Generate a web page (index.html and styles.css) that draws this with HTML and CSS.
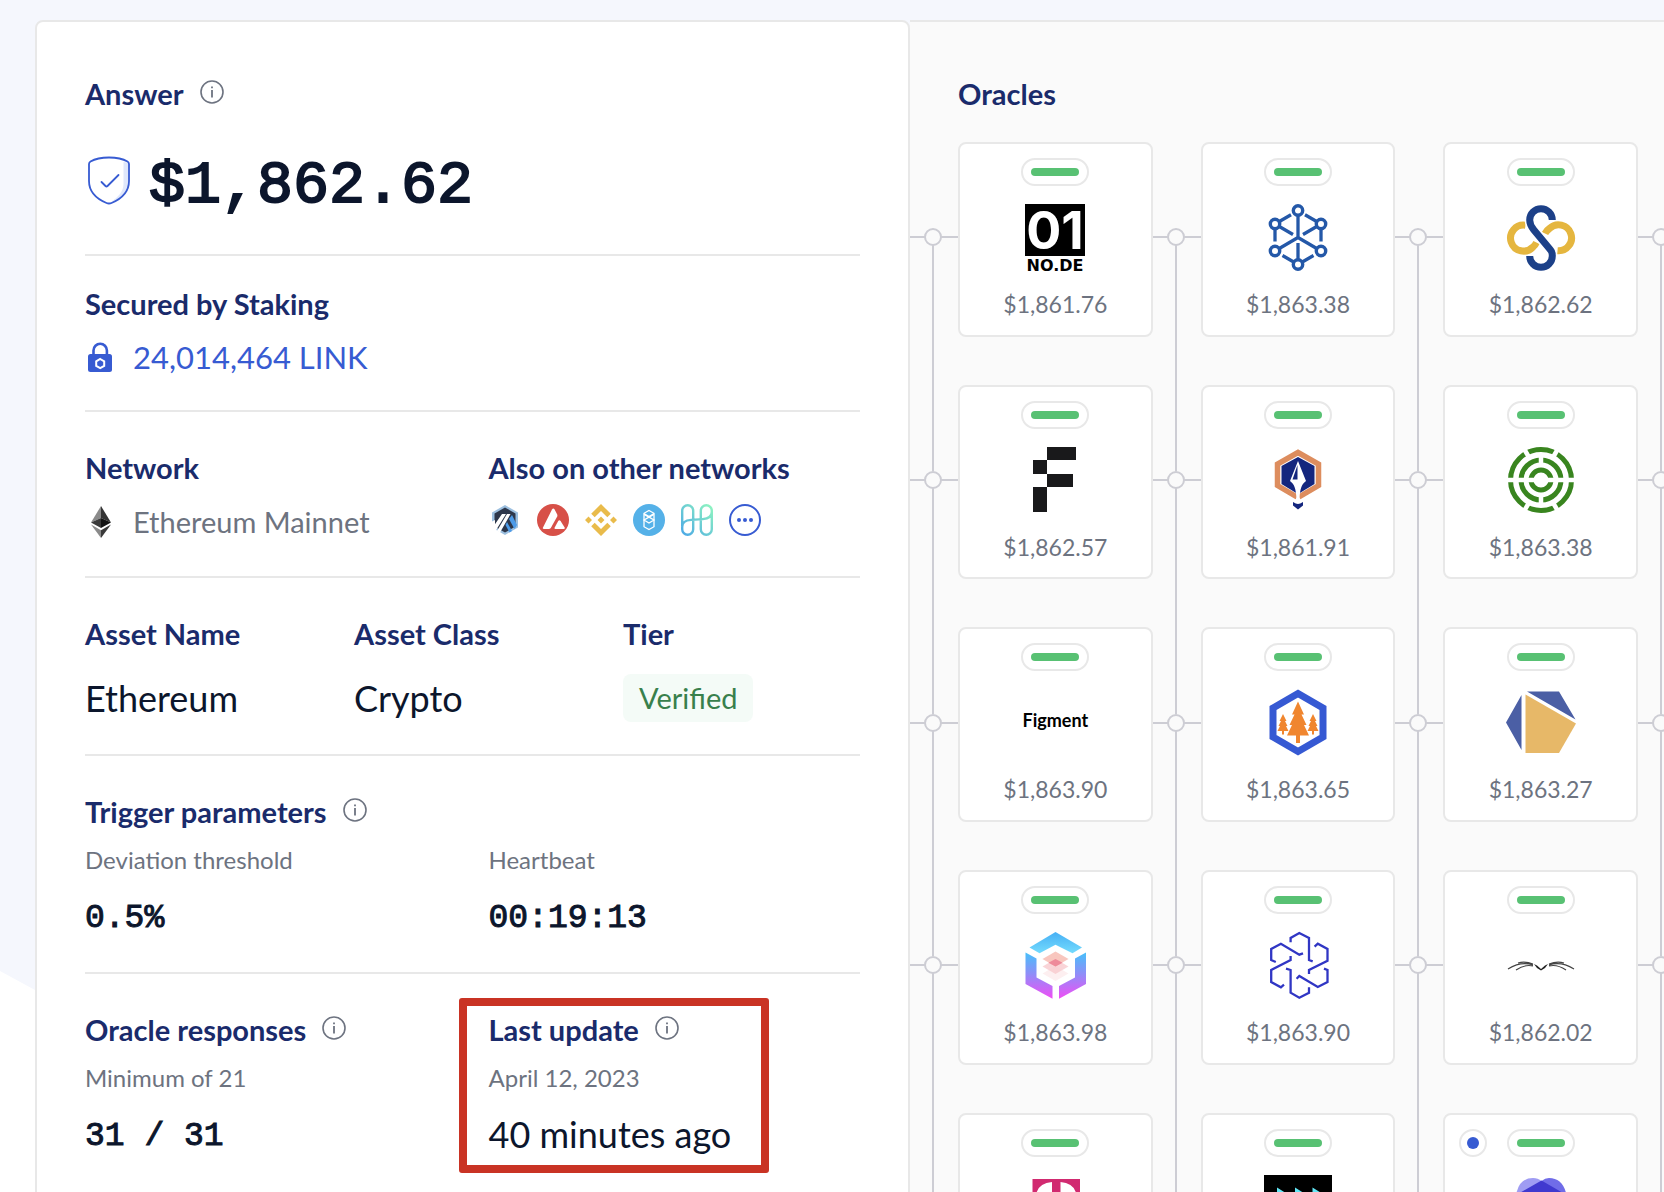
FILE: index.html
```html
<!DOCTYPE html>
<html lang="en">
<head>
<meta charset="utf-8">
<meta name="viewport" content="width=device-width, initial-scale=1">
<title>ETH / USD price feed</title>
<link rel="stylesheet" href="styles.css">
</head>
<body>
<svg class="defs" aria-hidden="true">
  <symbol id="info" viewBox="0 0 24 24"><circle cx="12" cy="12" r="11" fill="none" stroke="#6d7380" stroke-width="1.6"/><path d="M12 10v7.5M12 6.4v1.8" stroke="#6d7380" stroke-width="1.8" fill="none"/></symbol>
</svg>
<main class="feed">
  <section class="details">
    <div class="block block-answer">
      <h2 class="title">Answer <button class="info" aria-label="About the answer"><svg><use href="#info"/></svg></button></h2>
      <p class="answer">
        <svg class="shield" viewBox="0 0 48 48"><path d="M38.500 6v22c0 8-6 13.500-12 17.500 10-3.500 17-9.500 17-19.500V7z" fill="#dfe7fb"/><path d="M24 1.500c7.500 0 14 1.400 18.500 4 1 .6 1.500 1.200 1.500 2.500v17c0 11-8 18-17.500 22q-2.500 1-5 0C12 43 4 36 4 25V8c0-1.300.5-1.900 1.500-2.500C10 2.900 16.500 1.500 24 1.500z" fill="none" stroke="#375bd2" stroke-width="1.800"/><path d="M16.500 26l4 4q1 1 2 0L33.500 19" fill="none" stroke="#375bd2" stroke-width="1.800" stroke-linecap="round"/></svg>
        <span class="amount">$1,862.62</span>
      </p>
    </div>
    <div class="block block-staking">
      <h2 class="title">Secured by Staking</h2>
      <p class="staked">
        <svg class="lock" viewBox="0 0 32 32"><path d="M8.500 14V9.500a6.700 6.700 0 0 1 13.400 0V14" fill="none" stroke="#375bd2" stroke-width="2.600"/><rect x="3" y="13" width="24" height="18" rx="2.500" fill="#375bd2"/><path d="M15.200 18l4 2.300v4.500l-4 2.300-4-2.300v-4.500z" fill="none" stroke="#fff" stroke-width="2"/></svg>
        <a href="#staking">24,014,464 LINK</a>
      </p>
    </div>
    <div class="block cols-2">
      <div>
        <h2 class="title">Network</h2>
        <p class="network">
          <svg class="eth" viewBox="0 0 32 32"><path d="M16 0L6 16.500 16 12z" fill="#8a8a8a"/><path d="M16 0l10 16.500L16 12z" fill="#343434"/><path d="M6 16.500L16 12v10z" fill="#3a3a3a"/><path d="M26 16.500L16 12v10z" fill="#141414"/><path d="M6 18.500l10 5.700V32z" fill="#8a8a8a"/><path d="M26 18.500l-10 5.700V32z" fill="#393939"/></svg>
          <span>Ethereum Mainnet</span>
        </p>
      </div>
      <div>
        <h2 class="title">Also on other networks</h2>
        <div class="networks">
          <a href="#arbitrum" aria-label="Arbitrum"><svg viewBox="0 0 32 32"><path d="M16 1l13 7.500v15L16 31 3 23.500v-15z" fill="#9dc0e0"/><path d="M16 3.500l10.500 6v13L16 28.500l-10.500-6v-13z" fill="#2d374b"/><path d="M20 15l3-4 5 10-2.500 4z" fill="#4d9be8"/><path d="M18 18l5 9-2.500 1.500L16.500 21z" fill="#4d9be8"/><path d="M13 10h4L6.500 27 3 24.500zM18 10h3.500L11 28.500 8 27z" fill="#fff"/><path d="M2 18l4-2v8l-4 1z" fill="#fff"/></svg></a>
          <a href="#avalanche" aria-label="Avalanche"><svg viewBox="0 0 32 32"><circle cx="16" cy="16" r="16" fill="#d75048"/><path d="M15 5.500q1.300-2 2.600 0l2.500 4.700q.6 1.300 0 2.600L13.800 24q-.7 1-2 1H7q-1.800 0-.9-1.800z" fill="#fff"/><path d="M21.200 17q1.200-1.600 2.400 0l4 6.500q.7 1.500-1 1.500h-8q-1.700 0-.9-1.600z" fill="#fff"/></svg></a>
          <a href="#bnb" aria-label="BNB Chain"><svg viewBox="0 0 32 32" fill="#e9bb4b"><path d="M16 0l9.800 9.800-3.500 3.500L16 7l-6.300 6.300-3.500-3.500z"/><path d="M16 32l9.800-9.800-3.500-3.500L16 25l-6.300-6.300-3.500 3.500z"/><path d="M3.500 12.500L7 16l-3.500 3.500L0 16zM28.500 12.500L32 16l-3.500 3.500L25 16zM16 12.500l3.500 3.500-3.500 3.500-3.500-3.500z"/></svg></a>
          <a href="#fantom" aria-label="Fantom"><svg viewBox="0 0 32 32"><circle cx="16" cy="16" r="16" fill="#55b1e8"/><g fill="none" stroke="#fff" stroke-width="1.300"><path d="M16 6.500l5 2.800v13.400l-5 2.800-5-2.800V9.300z"/><path d="M11 9.500l5 3 5-3M11 16l5-3 5 3-5 3zM11 10.500l10 5.500M21 10.500L11 16"/></g></svg></a>
          <a href="#harmony" aria-label="Harmony"><svg viewBox="0 0 32 32"><defs><linearGradient id="one" x1="0" y1="1" x2="1" y2="0"><stop offset="0" stop-color="#4ba8e6"/><stop offset="1" stop-color="#8ff5c0"/></linearGradient></defs><g fill="none" stroke="url(#one)" stroke-width="2.400"><path d="M1.200 22V6.700a5.500 5.500 0 0 1 11 0v18.600a5.500 5.500 0 0 1-11 0V23c0-5 3-6.600 9-7.100l11.600-.8c6-.5 9-2.600 9-7.100V6.700a5.500 5.500 0 0 0-11 0v18.600a5.500 5.500 0 0 0 11 0V8"/></g></svg></a>
          <button class="more" aria-label="More networks"><svg viewBox="0 0 32 32"><circle cx="16" cy="16" r="15" fill="none" stroke="#375bd2" stroke-width="2"/><g fill="#375bd2"><circle cx="10" cy="16" r="2"/><circle cx="16" cy="16" r="2"/><circle cx="22" cy="16" r="2"/></g></svg></button>
        </div>
      </div>
    </div>
    <div class="block cols-3">
      <div><h2 class="title">Asset Name</h2><p class="asset">Ethereum</p></div>
      <div><h2 class="title">Asset Class</h2><p class="asset">Crypto</p></div>
      <div><h2 class="title">Tier</h2><p class="asset"><span class="badge">Verified</span></p></div>
    </div>
    <div class="block">
      <h2 class="title">Trigger parameters <button class="info" aria-label="About trigger parameters"><svg><use href="#info"/></svg></button></h2>
      <div class="cols-2">
        <div><p class="sub">Deviation threshold</p><p class="value mono">0.5%</p></div>
        <div><p class="sub">Heartbeat</p><p class="value mono">00:19:13</p></div>
      </div>
    </div>
    <div class="block cols-2">
      <div>
        <h2 class="title">Oracle responses <button class="info" aria-label="About oracle responses"><svg><use href="#info"/></svg></button></h2>
        <p class="sub">Minimum of 21</p>
        <p class="value mono">31 / 31</p>
      </div>
      <div class="marked">
        <h2 class="title">Last update <button class="info" aria-label="About the last update"><svg><use href="#info"/></svg></button></h2>
        <p class="sub">April 12, 2023</p>
        <p class="value">40 minutes ago</p>
      </div>
    </div>
  </section>

  <section class="oracles">
    <h2 class="title">Oracles</h2>
    <ul class="grid">
      <li class="card"><i class="link"></i><span class="pill"></span>
        <svg class="logo" viewBox="0 0 68 68"><path d="M4 0h60v52H4z"/><text x="34" y="45" class="logo-01">01</text><text x="34" y="67" class="logo-node">NO.DE</text></svg>
        <span class="price">$1,861.76</span></li>
      <li class="card"><i class="link"></i><span class="pill"></span>
        <svg class="logo" viewBox="0 0 68 68"><g fill="none" stroke="#2458a8" stroke-width="3.300"><path d="M34 6v27.500L11 47M34 33.500L57 47M11 20l18 10.500M57 20L39 30.500M34 60V39M11 20l16-9.200M57 20l-16-9.200M11 20v17.500M57 20v17.500M34 60.500l-15.500-9M34 60.500l15.500-9"/><g fill="#fff" stroke-width="3.400"><circle cx="34" cy="6.500" r="4.700"/><circle cx="57" cy="20" r="4.700"/><circle cx="57" cy="47" r="4.700"/><circle cx="34" cy="60.500" r="4.700"/><circle cx="11" cy="47" r="4.700"/><circle cx="11" cy="20" r="4.700"/></g></g></svg>
        <span class="price">$1,863.38</span></li>
      <li class="card"><i class="link"></i><i class="link link-end"></i><span class="pill"></span>
        <svg class="logo" viewBox="0 0 68 68" fill="none"><path d="M18.500 21.200A13 13 0 1 0 26 43q2-1.500 3.500-4.500M38 29.500q1.500-3 4.500-5A13 13 0 1 1 50.500 46.800" stroke="#e5b63f" stroke-width="7"/><path d="M45.300 16a11.300 11.300 0 1 0-22.600 0c0 4 1 6 4 9.700L41.500 43.500c3 3.500 3.800 4.500 3.800 8.500a11.300 11.300 0 0 1-22.600 0" stroke="#fff" stroke-width="10"/><path d="M45.300 16a11.300 11.300 0 1 0-22.600 0c0 4 1 6 4 9.700L41.500 43.500c3 3.500 3.800 4.500 3.800 8.500a11.300 11.300 0 0 1-22.600 0" stroke="#1c4088" stroke-width="7"/></svg>
        <span class="price">$1,862.62</span></li>

      <li class="card"><i class="link"></i><span class="pill"></span>
        <svg class="logo" viewBox="0 0 68 68"><path d="M26 0h29v13H26v14h26v13H26v25H12V40h14V27H12V13h14z" fill="#19191b"/></svg>
        <span class="price">$1,862.57</span></li>
      <li class="card"><i class="link"></i><span class="pill"></span>
        <svg class="logo" viewBox="0 0 68 68"><path d="M33 50L13.500 38.500V17L34 5.500 54.500 17v21.500L35 50" fill="none" stroke="#dd8d5e" stroke-width="5.500"/><path d="M34 10l16.500 9v18L35 46.500h-2L17.500 37V19z" fill="#14267e"/><path d="M34 14l8 20c-4 3-6 7-6.500 18h-3C32 41 30 37 26 34z" fill="#fff"/><path d="M33.500 18v14.500h-5z" fill="#14267e"/><path d="M29 55q3 2 5 2t5-2v3.500L34 62.500l-5-4z" fill="#14267e"/></svg>
        <span class="price">$1,861.91</span></li>
      <li class="card"><i class="link"></i><i class="link link-end"></i><span class="pill"></span>
        <svg class="logo" viewBox="0 0 68 68" fill="none"><g stroke="#39851f" stroke-width="5"><circle cx="34" cy="33" r="30.500"/><circle cx="34" cy="33" r="20"/><circle cx="34" cy="33" r="10"/></g><path d="M0 33h68M34 8v10M34 48v10M21.500 9.500L16 0M46.500 9.500L52 0M21.500 56.500L16 66M46.500 56.500L52 66" stroke="#fff" stroke-width="4.500"/></svg>
        <span class="price">$1,863.38</span></li>

      <li class="card"><i class="link"></i><span class="pill"></span>
        <span class="logo wordmark">Figment</span>
        <span class="price">$1,863.90</span></li>
      <li class="card"><i class="link"></i><span class="pill"></span>
        <svg class="logo" viewBox="0 0 68 68"><path d="M34 4.500l25 14.500v29L34 62.500 9 48V19z" fill="#fff" stroke="#3659d3" stroke-width="7"/><g fill="#f0862f"><path d="M34 12.500l6 13h-2.500l5 10.500H40l5 10.500H36v7.500h-4v-7.500h-9L28 36h-2.500l5-10.500H28z"/><path d="M19 25l3.500 7H21l2.500 5H22l2.500 5H20v3.500h-2V42h-4.500L16 37h-1.500l2.500-5h-1.500z"/><path d="M49 25l3.500 7H51l2.500 5H52l2.500 5H50v3.500h-2V42h-4.500L46 37h-1.500l2.500-5h-1.500z"/></g></svg>
        <span class="price">$1,863.65</span></li>
      <li class="card"><i class="link"></i><i class="link link-end"></i><span class="pill"></span>
        <svg class="logo" viewBox="0 0 68 68"><path d="M-1 33.500L14.500 6v55zM20 2.500h32l16.500 28z" fill="#4b5fa5"/><path d="M18.500 5.500L69 34.500 52 64H18.500z" fill="#e7b868"/></svg>
        <span class="price">$1,863.27</span></li>

      <li class="card"><i class="link"></i><span class="pill"></span>
        <svg class="logo" viewBox="0 0 68 68"><defs><linearGradient id="cap" x1="0" y1="0" x2="0" y2="1"><stop offset="0" stop-color="#47b0f5"/><stop offset="1" stop-color="#74dbfd"/></linearGradient><linearGradient id="side" x1="0" y1="0" x2="0" y2="1"><stop offset="0" stop-color="#47c0fa"/><stop offset=".45" stop-color="#8d8ff8"/><stop offset="1" stop-color="#f04ef5"/></linearGradient></defs><path d="M34.500 0L61 15.500l-9.500 5.800-17-8.500-16 8.500L8.500 15.500z" fill="url(#cap)"/><path d="M4.500 20.500l11 6v19l16 8.500v12.700L4.500 52zM65 20.500l-11 6v19L38 54v12.700L65 52z" fill="url(#side)"/><path d="M34.500 34l13 7.500-13 7.500-13-7.500z" fill="#fdeff0"/><path d="M34.500 27l13 7.500-13 7.500-13-7.500z" fill="#f7c9cd" fill-opacity=".8"/><path d="M34.500 19.500l13 7.500-13 7.500-13-7.500z" fill="#f6b8ae" fill-opacity=".8"/><path d="M34.500 27l7 3.800-7 3.700-7-3.700z" fill="#ee8a9a"/></svg>
        <span class="price">$1,863.98</span></li>
      <li class="card"><i class="link"></i><span class="pill"></span>
        <svg class="logo" viewBox="0 0 68 68"><path d="M26.600 10.300V6l8.700-5L45 6v22l3.700 1.300M11.800 30l-4.600-2V17l9.700-5.300 18.400 11 3.700-1.400M50.600 14.700l3.200-3 9.700 5.300v11.700L45 38v4M26.600 24v4L7.200 38v12l9.700 5.300 3.100-2.600M22 36.700l4.600 1.300v22.700l8.700 5 9.700-5v-5.400M32.600 46.700l2.700-2.700 18.500 11 9.700-5V38L60 36.700" fill="none" stroke="#3036c4" stroke-width="2.300"/></svg>
        <span class="price">$1,863.90</span></li>
      <li class="card"><i class="link"></i><i class="link link-end"></i><span class="pill"></span>
        <svg class="logo" viewBox="0 0 68 68" fill="none"><g stroke="#444" stroke-width="1.200"><path d="M26 33Q14 29 1 37M26 34Q18 32 9 38M26 32Q18 29 11 31M42 33q12-4 25 4M42 34q8-2 17 4M42 32q8-3 15-1"/></g><path d="M27 32l3 1.500 4 3.500 4-3.500 3-1.500-3 4-4 2.500-4-2.500z" fill="#222"/></svg>
        <span class="price">$1,862.02</span></li>

      <li class="card"><i class="link"></i><span class="pill"></span>
        <svg class="logo" viewBox="0 0 68 68"><path d="M11.500 4h47.500v64H11.500z" fill="#d12a70"/><path d="M31 7v45H15V20Q17 8 31 7zM39.500 7v45H55.500V20Q53.500 8 39.500 7z" fill="#fff"/></svg></li>
      <li class="card"><i class="link"></i><span class="pill"></span>
        <svg class="logo" viewBox="0 0 68 68"><path d="M0 0h68v68H0z"/><path d="M13 12.500l16 10-16 10zM31 12.500l16 10-16 10zM48.500 12.500l16 10-16 10z" fill="#63e6f5"/></svg></li>
      <li class="card"><i class="link"></i><i class="link link-end"></i><span class="dot"></span><span class="pill"></span>
        <svg class="logo" viewBox="0 0 68 68"><path d="M9 20Q12 3 26 3q5 0 8.500 3L22 40z" fill="#9f9cf3"/><path d="M59.500 20Q56 3 42 3q-4 0-7.500 3L46 40z" fill="#706ce8"/><path d="M34.500 5.500L59.500 20 50 50H18L9 20z" fill="#4039cf"/></svg></li>
    </ul>
  </section>
</main>
</body>
</html>
```

FILE: styles.css
```css
*, *::before, *::after { box-sizing: border-box; }

body {
  position: relative;
  margin: 0;
  height: 100vh;
  overflow: hidden;
  background: #fff;
  color: #0c162c;
  font-family: Lato, "Liberation Sans", sans-serif;
}

/* tinted backdrop with a slanted lower edge */
body::before {
  content: "";
  position: absolute;
  inset: 0;
  z-index: -1;
  background: #f5f7fd;
  clip-path: polygon(0 0, 100% 0, 100% 100%, 440px 100%, 440px 1210px, 0 971px);
}

h2, p, ul { margin: 0; padding: 0; }
ul { list-style: none; }
button { padding: 0; border: 0; background: none; cursor: pointer; }
a { color: inherit; text-decoration: none; }
svg { display: block; flex: none; overflow: visible; }
.defs { position: absolute; width: 0; height: 0; }

.feed {
  display: grid;
  grid-template-columns: minmax(0, 875fr) minmax(0, 754fr);
  margin: 20px 0 0 35px;
}

.details {
  padding: 16px 48px 0;
  border: 2px solid #e8e8e8;
  border-radius: 8px 8px 0 0;
  background: #fff;
}

.block { padding: 32px 0; }
.block + .block { border-top: 2px solid #e8e8e8; }
.block-staking { padding-top: 24px; }

.cols-2, .cols-3 { display: grid; column-gap: 32px; }
.cols-2 { grid-template-columns: repeat(2, minmax(0, 1fr)); }
.cols-3 { grid-template-columns: repeat(3, minmax(0, 1fr)); }

.title {
  display: flex;
  align-items: center;
  gap: 16px;
  color: #1a2b6b;
  font-size: 29px;
  font-weight: 700;
  line-height: 48px;
}
.info { height: 28px; padding-bottom: 4px; }
.info svg { width: 24px; height: 24px; }

.answer {
  display: flex;
  align-items: center;
  gap: 16px;
  padding-top: 20px;
}
.amount {
  padding-top: 12px;
  font: 400 60px/72px "Liberation Mono", monospace;
  -webkit-text-stroke: 2px currentColor;
}
.shield { width: 48px; height: 48px; }

.staked, .network { display: flex; align-items: center; gap: 16px; }
.staked {
  padding-top: 8px;
  color: #375bd2;
  font-size: 31px;
  line-height: 42px;
}
.lock, .eth { width: 32px; height: 32px; }
.network {
  padding-top: 8px;
  color: #6d7380;
  font-size: 29px;
  line-height: 44px;
}
.networks { display: flex; gap: 16px; padding-top: 12px; }
.networks svg { width: 32px; height: 32px; }

.asset { padding-top: 16px; font-size: 36px; line-height: 48px; }
.badge {
  display: inline-block;
  padding: 0 16px;
  border-radius: 8px;
  background: #f4fbf7;
  color: #38804c;
  font-size: 29px;
  vertical-align: top;
}

.sub { color: #6d7380; font-size: 24px; line-height: 48px; }
.value { padding-top: 8px; font-size: 36px; line-height: 48px; }
.mono {
  padding-top: 14px;
  font: 400 33px/42px "Liberation Mono", monospace;
  -webkit-text-stroke: 1px currentColor;
}

.marked { position: relative; }
.marked::after {
  content: "";
  position: absolute;
  inset: -8px auto -15px -30px;
  width: 310px;
  border: 8px solid #c93324;
  border-radius: 3px;
  pointer-events: none;
}

.oracles {
  overflow: hidden;
  padding: 48px 26px 48px 48px;
  border-top: 2px solid #e8e8e8;
  background: #fafafa;
}
.grid {
  display: grid;
  grid-template-columns: repeat(3, minmax(0, 1fr));
  gap: 48px;
  padding-top: 24px;
}

.card {
  position: relative;
  display: flex;
  flex-direction: column;
  align-items: center;
  aspect-ratio: 1;
  padding-top: 14px;
  border: 2px solid #e8e8e8;
  border-radius: 8px;
  background: #fff;
}
.pill {
  width: 68px;
  height: 28px;
  padding: 8px;
  border: 2px solid #e8e8e8;
  border-radius: 14px;
}
.pill::before {
  content: "";
  display: block;
  height: 8px;
  border-radius: 4px;
  background: #58c173;
}
.dot {
  position: absolute;
  top: 14px;
  left: 14px;
  width: 28px;
  height: 28px;
  padding: 6px;
  border: 2px solid #e8e8e8;
  border-radius: 50%;
}
.dot::before {
  content: "";
  display: block;
  height: 12px;
  border-radius: 50%;
  background: #375bd2;
}
.logo { width: 68px; height: 68px; margin-top: 18px; }
.logo-01, .logo-node { font-weight: 700; text-anchor: middle; }
.logo-01 { fill: #fff; font-family: Inter, sans-serif; font-size: 52px; }
.logo-node { font-family: "DejaVu Sans", sans-serif; font-size: 16px; }
.wordmark {
  color: #000;
  font-size: 18px;
  font-weight: 700;
  line-height: 62px;
  text-align: center;
}
.price {
  margin-top: 16px;
  color: #6d7380;
  font-size: 23px;
  line-height: 32px;
}

/* connector between cards: rail, branch and node */
.link {
  position: absolute;
  top: calc(50% - 11px);
  left: -50px;
  width: 48px;
  height: calc(100% + 52px);
  background:
    linear-gradient(#cdcdd4, #cdcdd4) 0 8px / 100% 2px no-repeat,
    linear-gradient(#cdcdd4, #cdcdd4) 22px 9px / 2px 100% no-repeat;
}
.link::before {
  content: "";
  position: absolute;
  left: 14px;
  width: 18px;
  height: 18px;
  border: 2px solid #cdcdd4;
  border-radius: 50%;
  background: #fafafa;
}
.link-end { left: calc(100% + 2px); }
```
